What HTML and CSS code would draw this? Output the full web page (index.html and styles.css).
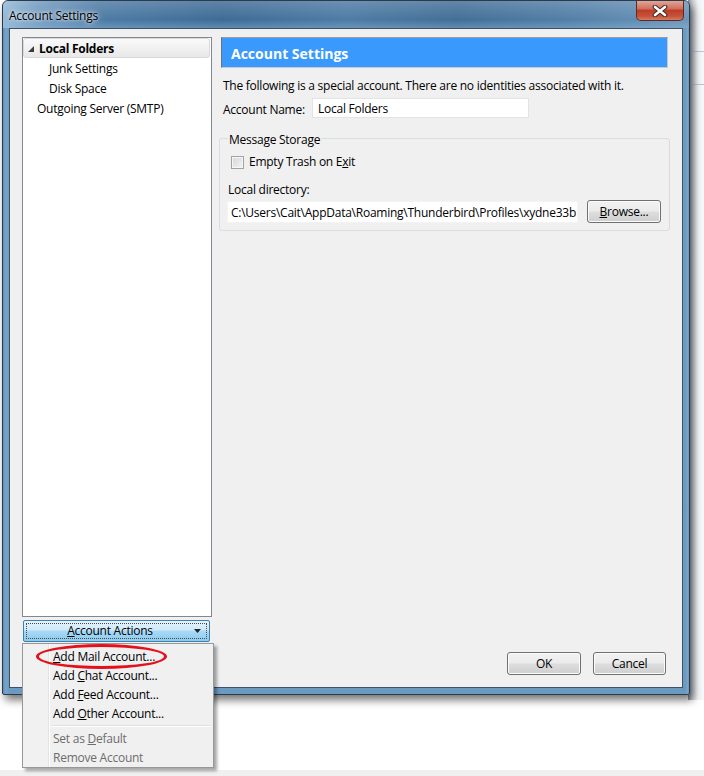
FILE: index.html
```html
<!DOCTYPE html>
<html>
<head>
<meta charset="utf-8">
<link rel="stylesheet" href="styles.css">
</head>
<body>
<div class="desktop">
  <div class="backwin"><div class="bw-line"></div><div class="bw-line second"></div></div>
  <div class="bottom-strip"></div>

  <div class="window">
    <div class="titlebar">
      <span class="title">Account Settings</span>
      <div class="close">
        <svg width="16" height="12" viewBox="0 0 16 12"><path d="M3 2 L13 10 M13 2 L3 10" stroke="#3a2a28" stroke-width="4.6" stroke-linecap="round"/><path d="M3 2 L13 10 M13 2 L3 10" stroke="#ffffff" stroke-width="2.6" stroke-linecap="round"/></svg>
      </div>
    </div>
    <div class="client">
      <div class="left">
        <div class="tree">
          <div class="row sel"><svg class="twisty" width="6" height="6" viewBox="0 0 6 6"><path d="M6 0 L6 6 L0 6 Z" fill="#3c3c3c"/></svg><span class="bold">Local Folders</span></div>
          <div class="row sub">Junk Settings</div>
          <div class="row sub">Disk Space</div>
          <div class="row top">Outgoing Server (SMTP)</div>
        </div>
        <div class="actions">
          <div class="focus"><span class="act-label"><u>A</u>ccount Actions</span></div>
          <svg class="drop" width="7" height="4" viewBox="0 0 7 4"><path d="M0 0 L7 0 L3.5 4 Z" fill="#222"/></svg>
        </div>
      </div>
      <div class="right">
        <div class="header">Account Settings</div>
        <div class="intro">The following is a special account. There are no identities associated with it.</div>
        <div class="field">
          <span class="label">Account Name:</span>
          <div class="input name">Local Folders</div>
        </div>
        <div class="group">
          <div class="legend">Message Storage</div>
          <div class="check"><span class="box"></span><span>Empty Trash on E<u>x</u>it</span></div>
          <div class="dirlabel">Local directory:</div>
          <div class="dirrow">
            <div class="input path">C:\Users\Cait\AppData\Roaming\Thunderbird\Profiles\xydne33b</div>
            <div class="btn browse"><u>B</u>rowse...</div>
          </div>
        </div>
        <div class="buttons">
          <div class="btn ok">OK</div>
          <div class="btn cancel">Cancel</div>
        </div>
      </div>
    </div>
  </div>

  <div class="menu">
    <div class="mi"><u>A</u>dd Mail Account...</div>
    <div class="mi">Add <u>C</u>hat Account...</div>
    <div class="mi">Add <u>F</u>eed Account...</div>
    <div class="mi">Add <u>O</u>ther Account...</div>
    <div class="sep"></div>
    <div class="mi dis">Set as <u>D</u>efault</div>
    <div class="mi dis">Remove Account</div>
  </div>
  <div class="ellipse"></div>
</div>
</body>
</html>
```
FILE: styles.css
```css
* { box-sizing: border-box; }
html, body { margin: 0; padding: 0; }
body {
  width: 704px;
  height: 776px;
  overflow: hidden;
  background: #ffffff;
  font-family: "Open Sans", "Noto Sans", sans-serif;
  font-size: 12px;
  letter-spacing: -0.25px;
  color: #000;
}
.desktop { position: relative; width: 704px; height: 776px; }

.backwin {
  position: absolute;
  left: 688px; top: 0;
  width: 16px; height: 700px;
  background: linear-gradient(90deg, #8a9097 0, #c9cdd1 4px, #f2f4f6 10px, #f7f8f9 16px);
}
.bw-line { margin-top: 51px; height: 1px; background: #b9c6d2; }
.bw-line.second { margin-top: 32px; }
.bottom-strip {
  position: absolute; left: 0; bottom: 0;
  width: 704px; height: 6px;
  background: #f0f0f0;
}

.window {
  position: absolute;
  left: 2px; top: 0;
  width: 688px; height: 695px;
  border: 1px solid #2b3b4c;
  border-radius: 6px 6px 2px 2px;
  background: linear-gradient(90deg, #5f8db5 0, #79a6cb 3px, #6b99bf 6px, #6b99bf 682px, #79a6cb 685px, #5f8db5 100%);
  box-shadow: 3px 5px 9px rgba(0,0,0,0.55);
  display: flex;
  flex-direction: column;
}
.titlebar {
  height: 27px;
  display: flex;
  align-items: flex-start;
  border-radius: 5px 5px 0 0;
  background:
    linear-gradient(180deg, rgba(255,255,255,0.18) 0, rgba(255,255,255,0.02) 70%, rgba(160,200,230,0.35) 100%),
    linear-gradient(90deg, #93b7d5 0%, #6f99bf 5%, #4a79a3 14%, #3a6993 32%, #4b79a3 50%, #3f6c95 66%, #4f7ca5 82%, #6a94b9 100%);
}
.title {
  flex: 1;
  padding: 7px 0 0 6px;
  font-size: 12px;
  line-height: 16px;
  color: #000;
  text-shadow: 0 0 6px rgba(255,255,255,0.9), 0 0 3px rgba(255,255,255,0.8);
}
.close {
  width: 48px; height: 20px;
  margin-right: 5px;
  border: 1px solid #5b2c25;
  border-top: none;
  border-radius: 0 0 5px 5px;
  background: linear-gradient(180deg, #e3a596 0, #d0705c 40%, #bd3e28 50%, #c7523a 80%, #d77c62 100%);
  display: flex; align-items: center; justify-content: center;
}

.client {
  margin: 0 6px 6px 6px;
  flex: 1;
  border: 1px solid #3d5266;
  background: #f0f0f0;
  padding: 8px 14px 12px 12px;
  display: grid;
  grid-template-columns: 190px 1fr;
  column-gap: 7px;
}

.left { display: flex; flex-direction: column; }
.tree {
  height: 580px;
  background: #fff;
  border: 1px solid #828790;
}
.row {
  height: 20px;
  line-height: 22px;
  padding-left: 14px;
  white-space: nowrap;
}
.row.sub { padding-left: 26px; }
.row.sel {
  position: relative;
  margin-right: 1px;
  border: 1px solid #d9d9d9;
  border-radius: 3px;
  background: linear-gradient(180deg, #fafafa 0, #f1f1f1 50%, #e8e8e8 100%);
  line-height: 19px;
  padding-left: 4px;
  padding-top: 1px;
  display: flex;
  align-items: center;
}
.twisty { margin: 0 5px 0 0; }
.bold { font-weight: bold; }

.actions {
  margin: 3px 2px 0 1px;
  height: 22px;
  border: 1px solid #3c7fb1;
  border-radius: 2px;
  background: linear-gradient(180deg, #e4f3fc 0, #cfeafa 45%, #a9daf6 50%, #8ccbee 100%);
  padding: 2px;
  position: relative;
}
.focus {
  height: 100%;
  border: 1px dotted #4a4a4a;
  display: flex; align-items: center; justify-content: center;
  line-height: 14px;
  padding-right: 13px;
}
.drop { position: absolute; right: 8px; top: 8px; }

.right { display: flex; flex-direction: column; }
.header {
  margin: 0 2px;
  height: 31px;
  background: #3a99fd;
  border: 1px solid #c8c8c8;
  border-left-color: #6d7178;
  border-top-color: #9a9ea3;
  color: #fff;
  font-weight: bold;
  font-size: 14px;
  letter-spacing: 0;
  line-height: 31px;
  padding-left: 9px;
}
.intro {
  margin-top: 9px;
  padding-left: 4px;
  line-height: 18px;
  white-space: nowrap;
}
.field {
  margin-top: 3px;
  display: flex; align-items: center;
  padding-left: 4px;
}
.label { width: 89px; padding-top: 2px; }
.input {
  background: #fff;
  border: 1px solid #e2e3e4;
  white-space: nowrap;
  overflow: hidden;
}
.input.name { width: 217px; height: 20px; line-height: 20px; padding-left: 5px; }

.group {
  margin-top: 20px;
  border: 1px solid #d7dde2;
  border-radius: 3px;
  padding: 0 8px 7px 7px;
}
.legend {
  margin: -8px 0 0 1px;
  width: fit-content;
  padding: 0 1px;
  background: #f0f0f0;
  line-height: 17px;
}
.check {
  margin: 6px 0 0 4px;
  display: flex; align-items: center;
  height: 16px;
  line-height: 18px;
}
.box {
  width: 13px; height: 13px;
  margin-right: 5px;
  border: 1px solid #a2a2a2;
  background: linear-gradient(135deg, #d6d6d6 0, #f4f4f4 100%);
  box-shadow: inset 0 0 0 1px #f6f6f6;
}
.dirlabel { margin: 11px 0 0 1px; line-height: 17px; }
.dirrow { margin-top: 2px; display: flex; align-items: flex-start; }
.input.path {
  margin-top: 1px;
  width: 351px; height: 22px;
  line-height: 22px;
  padding-left: 3px;
  border-color: #f3f3f3;
}
.btn {
  height: 23px;
  border: 1px solid #707070;
  border-radius: 3px;
  background: linear-gradient(180deg, #f2f2f2 0, #ebebeb 48%, #dddddd 52%, #cfcfcf 100%);
  box-shadow: inset 0 0 0 1px #fbfbfb;
  text-align: center;
  line-height: 22px;
}
.browse { margin-left: 9px; width: 74px; }
.buttons {
  margin-top: auto;
  display: flex;
  justify-content: flex-end;
  gap: 12px;
  padding-right: 4px;
}
.ok { width: 74px; }
.cancel { width: 73px; }

.menu {
  position: absolute;
  left: 22px; top: 643px;
  width: 192px; height: 125px;
  border: 1px solid #979797;
  background: linear-gradient(90deg, #f1f1f1 0, #f1f1f1 25px, #e2e3e3 25px, #e2e3e3 26px, #ffffff 26px, #ffffff 27px, #f0f0f0 27px);
  box-shadow: 3px 3px 3px rgba(0,0,0,0.35);
  padding: 3px 2px 2px 2px;
}
.mi {
  height: 19px;
  line-height: 20px;
  padding-left: 28px;
  white-space: nowrap;
}
.mi.dis { color: #6d6d6d; }
.sep {
  height: 6px;
  margin-left: 26px;
  background: linear-gradient(180deg, transparent 2px, #e0e0e0 2px, #e0e0e0 3px, #ffffff 3px, #ffffff 4px, transparent 4px);
}
.ellipse {
  position: absolute;
  left: 36px; top: 644px;
  width: 131px; height: 25px;
  border: 3.5px solid #e5101b;
  border-radius: 50%;
}
```
